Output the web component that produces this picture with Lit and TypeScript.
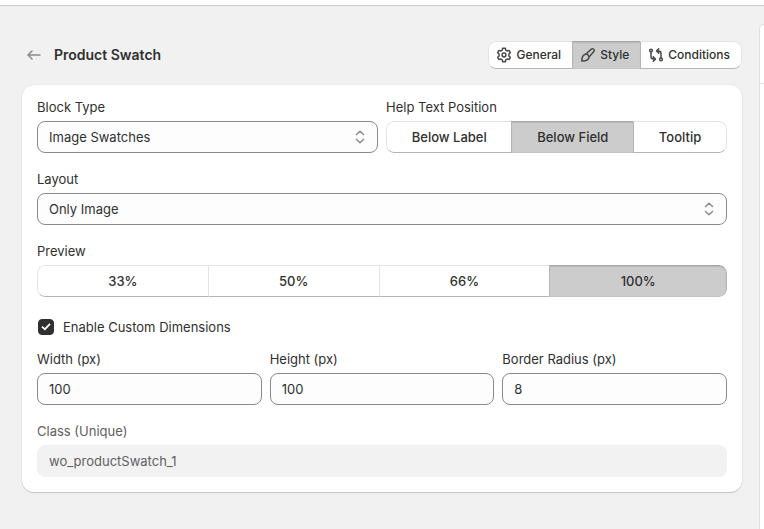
import { LitElement, html, css, svg, nothing } from "lit";
import { customElement, property, state } from "lit/decorators.js";
import { classMap } from "lit/directives/class-map.js";

const icons = {
  back: svg`<path d="M14 8H2.200M6 4 2 8l4 4" />`,
  gear: svg`<path d="M6.700 1.300h2.600l.5 1.900 1.300.75 1.900-.55 1.300 2.300-1.400 1.350v1.900l1.400 1.350-1.300 2.300-1.900-.55-1.300.75-.5 1.900H6.700l-.5-1.900-1.300-.75-1.900.55-1.300-2.300 1.400-1.350v-1.900L1.700 5.700 3 3.400l1.900.55 1.300-.75z" /><circle cx="8" cy="8" r="1.900" />`,
  brush: svg`<path d="M6 7 11.400 2.100a1.800 1.800 0 0 1 2.500 2.500L9 10" /><path d="M5.300 7.200c2.100-.6 4.100 1.400 3.500 3.500-.6 2.500-3.200 3.400-7 3.200 0-3.600.8-5.900 3.500-6.700z" />`,
  compare: svg`<circle cx="3" cy="3.600" r="1.400" /><circle cx="13" cy="12.400" r="1.400" /><path d="M3 5.100v4.500q0 2.500 2.500 2.500h1.300M5.200 9.900l2.200 2.200L5.200 14.300M13 10.900V6.400q0-2.500-2.500-2.500H9.200M10.800 1.700 8.600 3.900l2.200 2.200" />`,
  updown: svg`<path d="m4.500 5.500 3.500-3.300 3.500 3.300M4.500 10.500l3.500 3.300 3.500-3.300" />`,
};
type IconName = keyof typeof icons;

@customElement("ui-icon")
class UiIcon extends LitElement {
  @property() name: IconName = "gear";

  static styles = css`
    :host {
      display: block;
      flex: none;
      width: 16px;
      height: 16px;
    }
    .glyph {
      display: block;
      width: 100%;
      height: 100%;
      fill: none;
      stroke: currentColor;
      stroke-width: 1.5;
      stroke-linecap: round;
      stroke-linejoin: round;
    }
  `;

  render() {
    return html`<svg class="glyph" viewBox="0 0 16 16" aria-hidden="true">${icons[this.name]}</svg>`;
  }
}

interface Segment {
  label: string;
  icon?: IconName;
}

@customElement("segmented-buttons")
class SegmentedButtons extends LitElement {
  @property({ attribute: false }) segments: Segment[] = [];
  @property() value = "";
  @property() label = "";
  @property({ type: Boolean, reflect: true }) compact = false;

  static styles = css`
    :host {
      display: block;
    }
    .group {
      display: flex;
      height: 32px;
      border-radius: 8px;
      overflow: hidden;
    }
    .segment {
      flex: 1 1 auto;
      display: flex;
      align-items: center;
      justify-content: center;
      gap: 4px;
      padding: 0 12px;
      border: 1px solid #e3e3e3;
      border-bottom-color: #b5b5b5;
      border-right-width: 0;
      background: #fff;
      color: #303030;
      font: 550 13px/20px Inter, sans-serif;
      white-space: nowrap;
      cursor: pointer;
    }
    .segment:first-child {
      border-radius: 8px 0 0 8px;
    }
    .segment:last-child {
      border-right-width: 1px;
      border-radius: 0 8px 8px 0;
    }
    .pressed {
      border-color: #a6a6a6 #b5b5b5 #c4c4c4;
      background: #ccc;
      box-shadow: inset 0 1px 1px #b8b8b8;
    }
    .pressed + .segment {
      border-left-color: #b5b5b5;
    }
    :host([compact]) .group {
      height: 28px;
    }
    :host([compact]) .segment {
      padding: 0 11px 0 7px;
      font-size: 12px;
    }
    ui-icon {
      color: #4a4a4a;
    }
  `;

  private pick(label: string) {
    this.value = label;
  }

  render() {
    return html`<div class="group" role="group" aria-label=${this.label}>
      ${this.segments.map((s) => {
        const pressed = s.label === this.value;
        return html`<button
          type="button"
          class=${classMap({ segment: true, pressed })}
          aria-pressed=${pressed ? "true" : "false"}
          @click=${() => this.pick(s.label)}
        >${s.icon ? html`<ui-icon name=${s.icon}></ui-icon>` : nothing}<span>${s.label}</span></button>`;
      })}
    </div>`;
  }
}

@customElement("app-root")
class AppRoot extends LitElement {
  @state() private custom = true;

  static styles = css`
    :host {
      display: flex;
      flex-direction: column;
      min-height: 100vh;
      background: #f1f1f1;
      color: #303030;
      font: 400 13px/20px Inter, sans-serif;
    }
    * {
      box-sizing: border-box;
    }
    .topbar {
      height: 6px;
      background: #fff;
      border-bottom: 1px solid #ccc;
    }
    .page {
      flex: 1;
      display: grid;
      grid-template-columns: minmax(0, 1fr) 5px;
      gap: 17px;
      padding: 18px 0 0 22px;
    }
    .main {
      display: flex;
      flex-direction: column;
      gap: 16px;
      padding: 17px 0 36px;
    }
    .side {
      border: 1px solid #e0e0e0;
      border-width: 1px 0 0 1px;
      border-radius: 8px 0 0 0;
      background: #fff;
    }
    .side-head {
      height: 59px;
      border-bottom: 1px solid #e3e3e3;
    }
    .header {
      display: flex;
      align-items: center;
      justify-content: space-between;
    }
    .heading {
      display: flex;
      align-items: center;
      gap: 12px;
      padding-left: 4px;
    }
    .back {
      display: block;
      color: #8a8a8a;
    }
    .title {
      margin: 0;
      font: 600 14px/20px Inter, sans-serif;
    }
    .card {
      display: flex;
      flex-direction: column;
      gap: 16px;
      padding: 12px 15px 15px;
      border-radius: 12px;
      background: #fff;
      box-shadow: 0 1px 1px #c4c4c4, 0 0 1px #c4c4c4;
    }
    .pair,
    .triple {
      display: grid;
      grid-template-columns: repeat(2, minmax(0, 1fr));
      gap: 8px;
    }
    .triple {
      grid-template-columns: repeat(3, minmax(0, 1fr));
    }
    .field {
      display: flex;
      flex-direction: column;
      gap: 4px;
      min-width: 0;
    }
    .control {
      width: 100%;
      height: 32px;
      margin: 0;
      padding: 0 11px;
      border: 1px solid #8a8a8a;
      border-radius: 8px;
      background: #fdfdfd;
      color: #303030;
      font: inherit;
      appearance: none;
    }
    .picker {
      position: relative;
    }
    .picker .control {
      display: block;
    }
    .arrows {
      position: absolute;
      top: 8px;
      right: 10px;
      color: #8a8a8a;
      pointer-events: none;
    }
    .dimensions {
      display: flex;
      flex-direction: column;
      gap: 8px;
    }
    .choice {
      display: flex;
      align-items: center;
      align-self: flex-start;
      gap: 9px;
      padding: 4px 0 4px 1px;
    }
    .tick {
      display: grid;
      place-items: center;
      width: 16px;
      height: 16px;
      margin: 0;
      border: 1px solid #8a8a8a;
      border-radius: 4px;
      background: #fff;
      appearance: none;
    }
    .tick:checked {
      border-color: #303030;
      background: #303030;
    }
    .tick:checked::before {
      content: "";
      width: 10px;
      height: 8px;
      background: #fff;
      clip-path: polygon(4% 54%, 16% 38%, 38% 64%, 84% 4%, 97% 18%, 39% 94%);
    }
    .disabled {
      color: #616161;
    }
    .disabled .control {
      border-color: #f2f2f2;
      background: #f2f2f2;
      color: #616161;
    }
  `;

  private select(id: string, label: string, options: string[]) {
    return html`<div class="field">
      <label for=${id}>${label}</label>
      <div class="picker">
        <select class="control" id=${id}>
          ${options.map((o) => html`<option>${o}</option>`)}
        </select>
        <ui-icon class="arrows" name="updown"></ui-icon>
      </div>
    </div>`;
  }

  private segments(label: string, options: string[], value: string) {
    return html`<div class="field">
      <span>${label}</span>
      <segmented-buttons
        .label=${label}
        .segments=${options.map((o) => ({ label: o }))}
        .value=${value}
      ></segmented-buttons>
    </div>`;
  }

  private text(id: string, label: string, value: string, disabled = false) {
    return html`<div class=${classMap({ field: true, disabled })}>
      <label for=${id}>${label}</label>
      <input class="control" id=${id} type="text" .value=${value} ?disabled=${disabled} />
    </div>`;
  }

  render() {
    return html`
      <div class="topbar"></div>
      <div class="page">
        <main class="main">
          <header class="header">
            <div class="heading">
              <a class="back" href="#" aria-label="Back"><ui-icon name="back"></ui-icon></a>
              <h1 class="title">Product Swatch</h1>
            </div>
            <segmented-buttons
              compact
              label="Section"
              value="Style"
              .segments=${[
                { label: "General", icon: "gear" },
                { label: "Style", icon: "brush" },
                { label: "Conditions", icon: "compare" },
              ]}
            ></segmented-buttons>
          </header>
          <form class="card">
            <div class="pair">
              ${this.select("type", "Block Type", ["Image Swatches"])}
              ${this.segments("Help Text Position", ["Below Label", "Below Field", "Tooltip"], "Below Field")}
            </div>
            ${this.select("layout", "Layout", ["Only Image"])}
            ${this.segments("Preview", ["33%", "50%", "66%", "100%"], "100%")}
            <div class="dimensions">
              <label class="choice">
                <input
                  class="tick"
                  type="checkbox"
                  .checked=${this.custom}
                  @change=${(e: Event) => (this.custom = (e.target as HTMLInputElement).checked)}
                />
                <span>Enable Custom Dimensions</span>
              </label>
              ${this.custom
                ? html`<div class="triple">
                    ${this.text("width", "Width (px)", "100")}
                    ${this.text("height", "Height (px)", "100")}
                    ${this.text("radius", "Border Radius (px)", "8")}
                  </div>`
                : nothing}
            </div>
            ${this.text("class", "Class (Unique)", "wo_productSwatch_1", true)}
          </form>
        </main>
        <aside class="side"><div class="side-head"></div></aside>
      </div>
    `;
  }
}
